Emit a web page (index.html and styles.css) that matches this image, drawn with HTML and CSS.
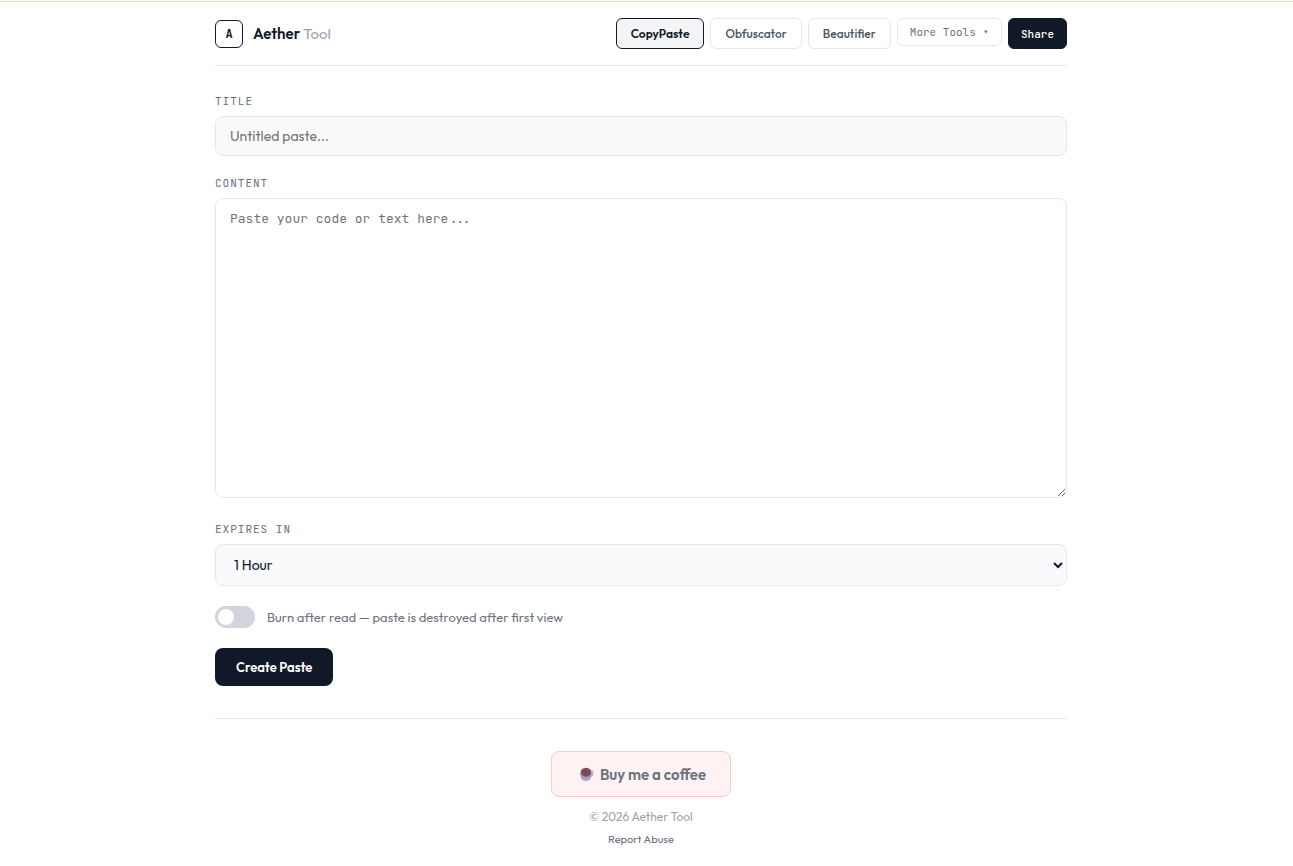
FILE: index.html
```
<!DOCTYPE html>
<html lang="en">
<head>
<meta charset="utf-8">
<meta name="viewport" content="width=device-width, initial-scale=1">
<title>Aether Tool</title>
<link rel="stylesheet" href="styles.css">
</head>

<body>

  <div class="container">

    <header class="header">
      <a class="brand" href="#">
        <span class="logo">A</span>
        <span class="brand-name">Aether <span>Tool</span></span>
      </a>
      <nav class="nav">
        <a class="nav-link active" href="#">CopyPaste</a>
        <a class="nav-link" href="#">Obfuscator</a>
        <a class="nav-link" href="#">Beautifier</a>
        <button class="more-btn" type="button">More Tools ▾</button>
        <button class="share-btn" type="button">Share</button>
      </nav>
    </header>

    <form>
      <div class="field">
        <label for="title">Title</label>
        <input type="text" id="title" placeholder="Untitled paste...">
      </div>

      <div class="field">
        <label for="content">Content</label>
        <textarea id="content" placeholder="Paste your code or text here..."></textarea>
      </div>

      <div class="field">
        <label for="expires">Expires in</label>
        <select id="expires">
          <option>1 Hour</option>
          <option>1 Day</option>
          <option>1 Week</option>
          <option>Never</option>
        </select>
      </div>

      <div class="toggle-row">
        <input type="checkbox" class="toggle" id="burn">
        <label for="burn">Burn after read — paste is destroyed after first view</label>
      </div>

      <button class="create-btn" type="submit">Create Paste</button>
    </form>

    <footer class="footer">
      <a class="coffee" href="#">
        <svg width="14" height="14" viewBox="0 0 14 14" aria-hidden="true">
          <path d="M10.500 4.500c3.500-1.500 3.500 3.500-.3 5.500" fill="none" stroke="#b8a6cc" stroke-width="1.300"/>
          <path d="M.3 6c0 5 1.400 8 5.700 8s5.400-3 5.700-8z" fill="#b3a0c8"/>
          <ellipse cx="6" cy="5.800" rx="5.700" ry="5" fill="#9d8ab0"/>
          <ellipse cx="6" cy="5.300" rx="4.900" ry="4.300" fill="#7d4c52"/>
        </svg>
        <span>Buy me a coffee</span>
      </a>
      <p class="copyright">© 2026 Aether Tool</p>
      <a class="report" href="#">Report Abuse</a>
    </footer>

  </div>

</body>
</html>
```
FILE: styles.css
```
* {
  box-sizing: border-box;
}

body {
  margin: 0;
  padding-right: 11px;
  font-family: Outfit, Lato, sans-serif;
  color: #111827;
  background-color: #fff;
}

/* Thin strip along the top of the window */
body::before {
  content: "";
  display: block;
  height: 1px;
  margin-right: -11px;
  background-color: #fbfcf0;
  border-bottom: 1px solid #e2e4d3;
}

a {
  text-decoration: none;
}

input, select, button, textarea {
  font-family: inherit;
}

.container {
  max-width: 900px;
  margin: 0 auto;
  padding: 0 24px;
}

/* Header */
.header {
  display: flex;
  justify-content: space-between;
  align-items: center;
  padding: 16px 0;
  margin-bottom: 28px;
  border-bottom: 1px solid #e5e7eb;
}

.brand {
  display: flex;
  align-items: center;
  gap: 10px;
  color: #111827;
}

.logo {
  display: flex;
  align-items: center;
  justify-content: center;
  width: 28px;
  height: 28px;
  border: 1px solid #111827;
  border-radius: 6px;
  font: bold 12px "JetBrains Mono", "DejaVu Sans Mono", monospace;
}

.brand-name {
  font-size: 15px;
  font-weight: 600;
}

.brand-name span {
  color: #9ca3af;
  font-weight: 400;
}

.nav {
  display: flex;
  align-items: flex-start;
  gap: 6px;
}

.nav-link {
  padding: 7px 14px;
  border: 1px solid #e5e7eb;
  border-radius: 6px;
  font-size: 12px;
  line-height: 15px;
  font-weight: 500;
  color: #4b5563;
}

.nav-link.active {
  border-color: #111827;
  background-color: #f3f4f6;
  font-weight: 600;
  color: #111827;
}

.more-btn, .share-btn {
  padding: 6px 12px;
  border: 1px solid #e5e7eb;
  border-radius: 6px;
  background-color: #fff;
  font: 11px/14px "JetBrains Mono", "DejaVu Sans Mono", monospace;
  color: #6b7280;
}

.share-btn {
  padding: 8px 12px 7px;
  border-color: #111827;
  background-color: #111827;
  font-weight: 500;
  color: #fff;
}

/* Form fields */
.field {
  margin-bottom: 20px;
}

.field label {
  display: block;
  margin-bottom: 8px;
  font: 11px/14px "JetBrains Mono", "DejaVu Sans Mono", monospace;
  letter-spacing: 1px;
  text-transform: uppercase;
  color: #6b7280;
}

.field input, .field textarea, .field select {
  width: 100%;
  padding: 10px 14px;
  border: 1px solid #e5e7eb;
  border-radius: 8px;
  background-color: #f9fafb;
  font-size: 14px;
  color: #111827;
}

.field input {
  height: 40px;
}

.field textarea {
  display: block;
  height: 300px;
  margin-bottom: 24px;
  background-color: #fff;
  font: 13px/20px "JetBrains Mono", "DejaVu Sans Mono", monospace;
  resize: vertical;
}

.field select {
  display: block;
  height: 42px;
}

/* Burn after read switch */
.toggle-row {
  display: flex;
  align-items: center;
  gap: 12px;
  margin-bottom: 20px;
  font-size: 13px;
  color: #6b7280;
}

.toggle {
  appearance: none;
  display: flex;
  width: 40px;
  height: 22px;
  margin: 0;
  padding: 3px;
  border-radius: 11px;
  background-color: #d1d5db;
}

.toggle::before {
  content: "";
  width: 16px;
  height: 16px;
  border-radius: 50%;
  background-color: #fff;
}

.toggle:checked {
  justify-content: flex-end;
  background-color: #111827;
}

.create-btn {
  display: block;
  height: 38px;
  padding: 0 21px;
  border: none;
  border-radius: 8px;
  background-color: #111827;
  font-size: 13px;
  font-weight: 600;
  color: #fff;
}

/* Footer */
.footer {
  display: flex;
  flex-direction: column;
  align-items: center;
  margin-top: 32px;
  padding: 32px 0 16px;
  border-top: 1px solid #e5e7eb;
}

.coffee {
  display: flex;
  align-items: center;
  gap: 6px;
  height: 46px;
  padding: 0 24px 0 28px;
  border: 1px solid #fecaca;
  border-radius: 8px;
  background-color: #fef2f2;
  font-size: 15px;
  font-weight: 600;
  color: #6b7280;
}

.copyright {
  margin: 12px 0 7px;
  font-size: 12px;
  line-height: 16px;
  color: #9ca3af;
}

.report {
  font-size: 11px;
  line-height: 14px;
  color: #6b7280;
}
```
